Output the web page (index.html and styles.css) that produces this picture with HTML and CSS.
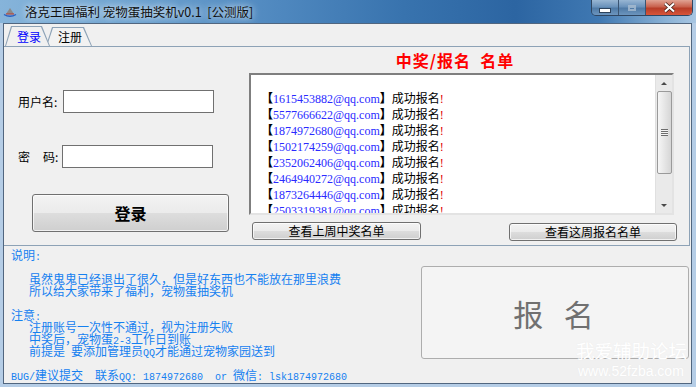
FILE: index.html
```html
<!DOCTYPE html>
<html lang="zh-CN">
<head>
<meta charset="UTF-8">
<title>洛克王国福利 宠物蛋抽奖机v0.1 [公测版]</title>
<link rel="stylesheet" href="styles.css">
</head>
<body>

<div class="window">
    <div class="titlebar">
        <svg class="app-icon" width="14" height="10" viewBox="0 0 14 10">
            <path d="M7 1 L11 7 L3 7 Z" fill="#8a8a8a"/>
            <path d="M1 7.5 Q7 11 13 7.5" stroke="#2a5fc0" stroke-width="1.4" fill="none"/>
            <path d="M3 7 L11 7" stroke="#c0392b" stroke-width="1"/>
        </svg>
        <span class="title">洛克王国福利 宠物蛋抽奖机v0.1&nbsp; [公测版]</span>
        <div class="controls">
            <span class="ctl min"><i></i></span>
            <span class="ctl max"><i></i></span>
            <span class="ctl close">
                <svg width="13" height="11" viewBox="0 0 13 11"><path d="M2 1.5 L11 9.5 M11 1.5 L2 9.5" stroke="#3b1a14" stroke-width="3.6"/><path d="M2 1.5 L11 9.5 M11 1.5 L2 9.5" stroke="#fff" stroke-width="2.2"/></svg>
            </span>
        </div>
    </div>

    <div class="client">
        <div class="tabs">
            <div class="tab active"><span>登录</span></div>
            <div class="tab"><span>注册</span></div>
        </div>

        <div class="panel">
            <!-- 登录 -->
            <div class="login">
                <div class="row">
                    <label>用户名:</label>
                    <input type="text" class="field">
                </div>
                <div class="row row2">
                    <label><span class="gap">密</span>码:</label>
                    <input type="password" class="field">
                </div>
                <button class="btn btn-login">登录</button>
            </div>

            <!-- 名单 -->
            <div class="list-col">
                <div class="list-title">中奖/报名&nbsp; 名单</div>
                <div class="listbox">
                    <div class="rows">
                        <div class="item"><b>【</b><span class="mail">1615453882@qq.com</span><b>】</b>成功报名<span class="ex">!</span></div>
                        <div class="item"><b>【</b><span class="mail">5577666622@qq.com</span><b>】</b>成功报名<span class="ex">!</span></div>
                        <div class="item"><b>【</b><span class="mail">1874972680@qq.com</span><b>】</b>成功报名<span class="ex">!</span></div>
                        <div class="item"><b>【</b><span class="mail">1502174259@qq.com</span><b>】</b>成功报名<span class="ex">!</span></div>
                        <div class="item"><b>【</b><span class="mail">2352062406@qq.com</span><b>】</b>成功报名<span class="ex">!</span></div>
                        <div class="item"><b>【</b><span class="mail">2464940272@qq.com</span><b>】</b>成功报名<span class="ex">!</span></div>
                        <div class="item"><b>【</b><span class="mail">1873264446@qq.com</span><b>】</b>成功报名<span class="ex">!</span></div>
                        <div class="item"><b>【</b><span class="mail">2503319381@qq.com</span><b>】</b>成功报名<span class="ex">!</span></div>
                    </div>
                    <div class="scrollbar">
                        <span class="arrow up"></span>
                        <span class="thumb"><i></i></span>
                        <span class="arrow down"></span>
                    </div>
                </div>
                <div class="list-buttons">
                    <button class="btn btn-small">查看上周中奖名单</button>
                    <button class="btn btn-small right">查看这周报名名单</button>
                </div>
            </div>
        </div>

        <div class="bottom">
            <div class="notes">
                <div>说明<span class="m">:</span></div>
                <div></div>
                <div class="in">虽然鬼鬼已经退出了很久，但是好东西也不能放在那里浪费</div>
                <div class="in">所以给大家带来了福利，宠物蛋抽奖机</div>
                <div></div>
                <div>注意<span class="m">:</span></div>
                <div class="in">注册账号一次性不通过，视为注册失败</div>
                <div class="in">中奖后，宠物蛋<span class="m">2-3</span>工作日到账</div>
                <div class="in">前提是<span class="m"> </span>要添加管理员<span class="m">QQ</span>才能通过宠物家园送到</div>
                <div></div>
                <div><span class="m">BUG/</span>建议提交<span class="m">&nbsp; </span>联系<span class="m">QQ: 1874972680&nbsp; or </span>微信<span class="m">: lsk1874972680</span></div>
            </div>
            <div class="signup">报 名</div>
        </div>
    </div>

    <div class="watermark">
        <div class="wm-cn">我爱辅助论坛</div>
        <div class="wm-en">www.52fzba.com</div>
    </div>
</div>

</body>
</html>
```

FILE: styles.css
```css
/* Geral */
* {
    box-sizing: border-box;
}
body {
    margin: 0;
    font-family: "Noto Sans CJK SC", sans-serif;
    font-size: 12px;
    color: #000;
}
.window {
    position: relative;
    width: 696px;
    height: 387px;
    background: #b5cde6;
    display: flex;
    flex-direction: column;
    overflow: hidden;
}

/* Barra de titulo */
.titlebar {
    height: 23px;
    flex-shrink: 0;
    display: flex;
    align-items: center;
    background: linear-gradient(90deg, #86b4da 0%, #6fa3d0 18%, #4f88bf 40%, #3873ae 58%, #2c65a2 74%, #3f78b2 86%, #8cb3d6 96%, #a8c6e2 100%);
}
.app-icon {
    margin: 0 8px 0 3px;
}
.title {
    font-size: 12.5px;
    color: #101010;
    text-shadow: 0 0 6px rgba(235, 245, 255, 0.9), 0 0 10px rgba(235, 245, 255, 0.7);
}
.controls {
    margin-left: auto;
    margin-right: 3px;
    align-self: flex-start;
    display: flex;
    height: 16px;
    border: 1px solid #2f4662;
    border-top: none;
    border-radius: 0 0 5px 5px;
    overflow: hidden;
}
.ctl {
    display: flex;
    align-items: center;
    justify-content: center;
    height: 15px;
    border-right: 1px solid #3a5472;
}
.ctl.min,
.ctl.max {
    width: 27px;
    background: linear-gradient(#98b6d3, #6a92bb 45%, #4f7aa6 55%, #6c95be);
}
.ctl.min i {
    width: 10px;
    height: 3px;
    margin-top: 5px;
    background: #fff;
    border: 1px solid #2d435c;
    box-sizing: content-box;
}
.ctl.max i {
    width: 8px;
    height: 6px;
    border: 2px solid #a9bdd1;
    border-top-width: 3px;
    opacity: 0.8;
}
.ctl.close {
    width: 46px;
    border-right: none;
    background: linear-gradient(#e0a394, #c9614d 45%, #b73d28 55%, #d8553a);
}

/* Area cliente */
.client {
    flex: 1;
    margin: 0 4px 3px 3px;
    border: 1px solid #51667f;
    background: #f0f0f0;
    display: flex;
    flex-direction: column;
}
.tabs {
    height: 22px;
    display: flex;
    align-items: flex-end;
    padding-left: 1px;
}
.tab {
    position: relative;
    width: 46px;
    height: 19px;
    margin-left: -4px;
    background: #8da2b6;
    clip-path: polygon(0 100%, 6px 0, calc(100% - 8px) 0, 100% 100%);
    display: flex;
    align-items: center;
    justify-content: center;
    z-index: 1;
}
.tab::before {
    content: "";
    position: absolute;
    top: 1px;
    left: 1px;
    right: 1px;
    bottom: 0;
    background: #f2f2f2;
    clip-path: polygon(0 100%, 6px 0, calc(100% - 8px) 0, 100% 100%);
}
.tab span {
    position: relative;
    padding-left: 2px;
}
.tab.active {
    width: 45px;
    height: 20px;
    margin-left: 0;
    z-index: 2;
}
.tab.active::before {
    background: #f0f0f0;
}
.tab.active span {
    color: #0000ff;
    padding-left: 3px;
}

.panel {
    height: 200px;
    margin-right: 1px;
    border: 1px solid #8da2b6;
    border-left: none;
    display: flex;
}

/* Login */
.login {
    width: 245px;
    padding: 43px 0 0 14px;
}
.row {
    display: flex;
    align-items: center;
}
.row label {
    width: 45px;
}
.row2 {
    margin-top: 32px;
}
.row2 .field {
    margin-left: -1px;
}
.gap {
    margin-right: 13px;
}
.field {
    width: 151px;
    height: 23px;
    border: 1px solid #707070;
    background: #fff;
    outline: none;
}
.btn {
    font-family: "Noto Sans CJK SC", sans-serif;
    font-size: 12px;
    color: #000;
    padding: 0;
    border: 1px solid #707070;
    border-radius: 3px;
    background: linear-gradient(#f3f3f3, #ebebeb 49%, #dddddd 51%, #cfcfcf);
    box-shadow: inset 0 0 0 1px rgba(255, 255, 255, 0.7);
}
.btn-login {
    display: block;
    width: 197px;
    height: 38px;
    margin: 26px 0 0 14px;
    font-size: 16px;
    font-weight: bold;
}

/* Lista */
.list-col {
    width: 428px;
    display: flex;
    flex-direction: column;
}
.list-title {
    height: 26px;
    line-height: 26px;
    padding-right: 16px;
    text-align: center;
    color: #ff0000;
    font-size: 16px;
    font-weight: bold;
    letter-spacing: 1px;
}
.listbox {
    width: 425px;
    height: 142px;
    border: 2px solid;
    border-color: #7f7f7f #e3e3e3 #e3e3e3 #7f7f7f;
    background: #fff;
    display: flex;
}
.rows {
    flex: 1;
    padding: 15px 0 0 10px;
    overflow: hidden;
}
.item {
    height: 16px;
    line-height: 16px;
    white-space: nowrap;
}
.item b {
    font-weight: 900;
}
.mail {
    font-family: "Liberation Serif", serif;
    font-size: 12px;
    color: #2a2aff;
}
.ex {
    font-family: "Liberation Serif", serif;
    color: #e00000;
}
.scrollbar {
    width: 17px;
    background: #eaeaea;
    border-left: 1px solid #e0e0e0;
    display: flex;
    flex-direction: column;
    align-items: center;
}
.arrow {
    width: 0;
    height: 0;
    border-left: 3px solid transparent;
    border-right: 3px solid transparent;
}
.arrow.up {
    margin: 7px 0 6px;
    border-bottom: 3px solid #4a4a4a;
}
.arrow.down {
    margin: auto 0 6px;
    border-top: 3px solid #4a4a4a;
}
.thumb {
    width: 15px;
    height: 83px;
    border: 1px solid #9a9a9a;
    border-radius: 2px;
    background: linear-gradient(90deg, #f6f6f6, #e6e6e6 50%, #d6d6d6);
    display: flex;
    align-items: center;
    justify-content: center;
}
.thumb i {
    width: 7px;
    height: 7px;
    background: repeating-linear-gradient(#6d6d6d 0 1px, #f4f4f4 1px 2px);
}
.list-buttons {
    display: flex;
    margin-top: 7px;
    padding-left: 3px;
}
.btn-small {
    width: 169px;
    height: 18px;
    line-height: 14px;
}
.btn-small.right {
    width: 168px;
    margin: 1px 0 0 auto;
}

/* Parte de baixo */
.bottom {
    flex: 1;
    display: flex;
}
.notes {
    flex: 1;
    padding: 3px 0 0 7px;
    line-height: 12px;
    color: #1580f0;
    white-space: nowrap;
}
.notes > div {
    height: 12px;
}
.notes .in {
    padding-left: 18px;
}
.m {
    font-family: "Liberation Mono", monospace;
    font-size: 10px;
    line-height: 10px;
}
.signup {
    width: 268px;
    height: 93px;
    margin: 20px 2px 0 0;
    border: 1px solid #adadad;
    border-radius: 3px;
    background: #f4f4f4;
    display: flex;
    align-items: center;
    justify-content: center;
    font-size: 30px;
    color: #707070;
    word-spacing: 14px;
    padding-right: 3px;
}

/* Marca de agua */
.watermark {
    position: absolute;
    left: 576px;
    top: 338px;
    color: #ffffff;
    text-shadow: 0 0 1px rgba(215, 215, 215, 0.35);
}
.wm-cn {
    font-size: 18.5px;
    line-height: 24px;
}
.wm-en {
    font-family: "Liberation Sans", sans-serif;
    font-size: 14px;
    line-height: 18px;
    padding-left: 2px;
}
```
